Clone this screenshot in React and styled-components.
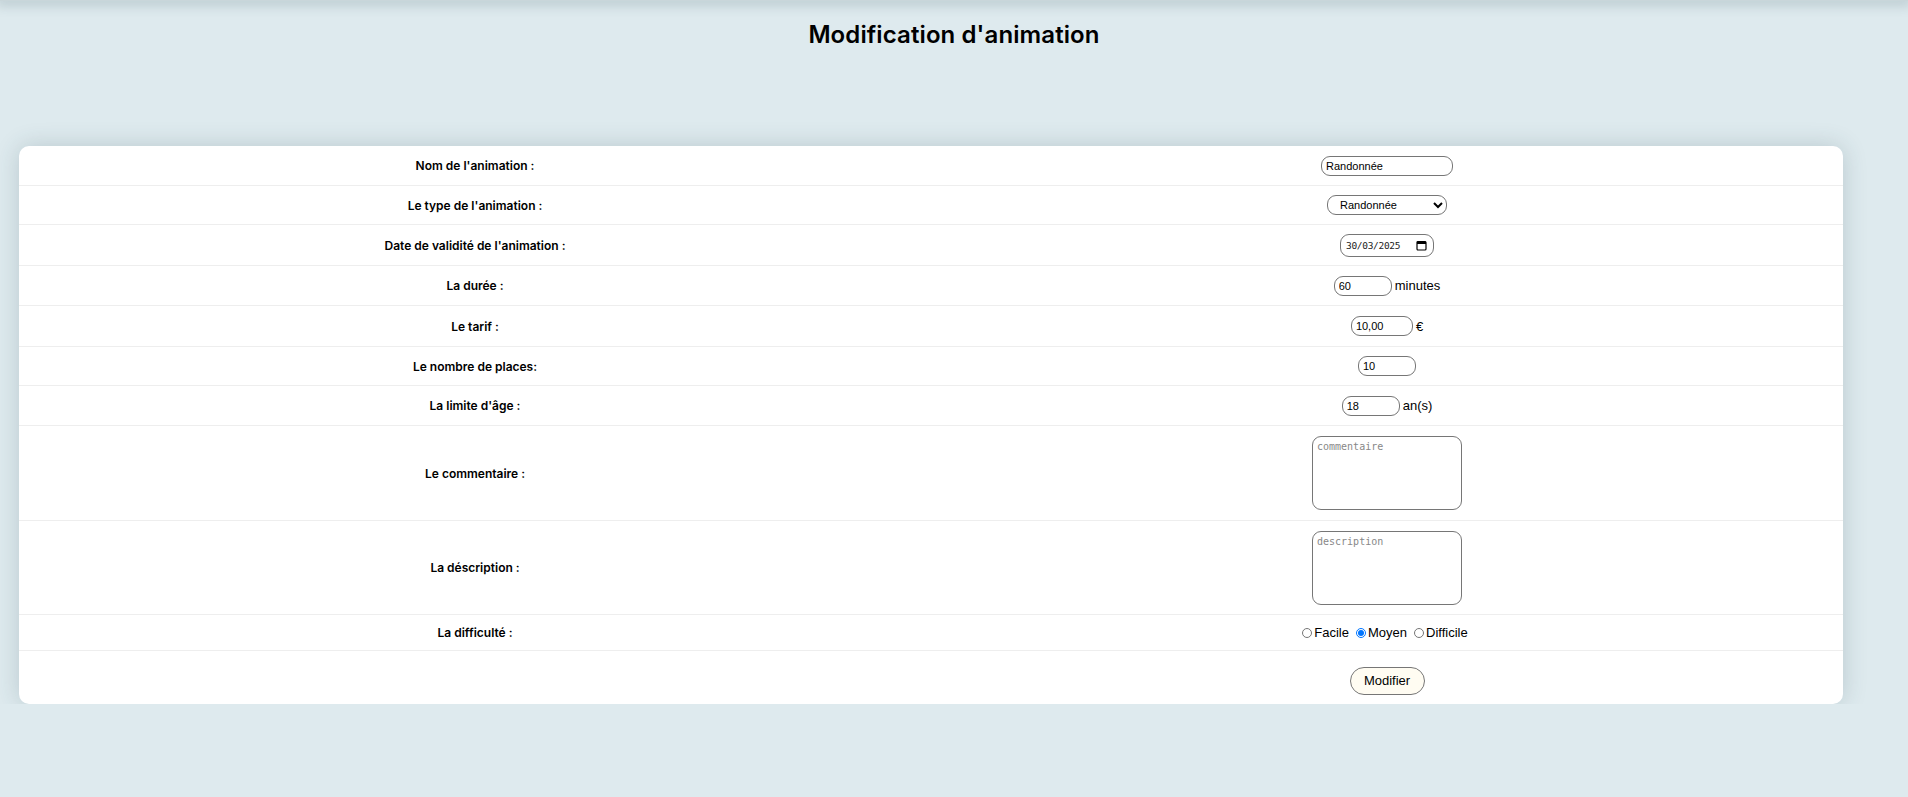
import React from 'react'
import styled, { createGlobalStyle } from 'styled-components'

const GlobalStyle = createGlobalStyle`
  body {
    margin: 0;
    background: #deeaee;
    font-family: Inter, "Liberation Sans", sans-serif;
    color: #000;
  }
`

const TopBar = styled.div`
  height: 1px;
  background: #c9d6da;
  box-shadow: 0 0 12px 4px rgba(60, 90, 100, 0.25);
`

const Title = styled.h1`
  margin: 16px 0 0;
  text-align: center;
  font-size: 24px;
  font-weight: 600;
  letter-spacing: 0.1px;
  line-height: 36px;
`

const Card = styled.div`
  margin: 93px 0 0 19px;
  width: 1824px;
  background: #fff;
  border-radius: 10px;
  box-shadow: 0 0 24px rgba(40, 70, 80, 0.2);
  overflow: hidden;
`

const Row = styled.div`
  display: grid;
  grid-template-columns: 1fr 1fr;
  align-items: center;
  height: ${p => p.h}px;
  box-sizing: border-box;
  border-bottom: ${p => (p.last ? 'none' : '1px solid #eeeeee')};
`

const Label = styled.div`
  text-align: center;
  font-size: 12px;
  font-weight: 600;
`

const Field = styled.div`
  display: flex;
  justify-content: center;
  align-items: center;
  gap: 3px;
  font-family: "Liberation Sans", Arial, sans-serif;
  font-size: 13px;
`

const TextInput = styled.input`
  box-sizing: border-box;
  width: ${p => p.w}px;
  height: 20px;
  padding: 1px 4px;
  border: 1px solid #767676;
  border-radius: 9px;
  font-family: "Liberation Sans", Arial, sans-serif;
  font-size: 11px;
  background: #fff;
  outline: none;
`

const DateBox = styled.label`
  box-sizing: border-box;
  display: inline-flex;
  align-items: center;
  justify-content: space-between;
  width: 94px;
  height: 23px;
  padding: 0 6px 0 5px;
  border: 1px solid #767676;
  border-radius: 9px;
  background: #fff;
  input {
    width: 62px;
    border: none;
    padding: 0;
    outline: none;
    font-family: "DejaVu Sans Mono", monospace;
    font-size: 9.5px;
    letter-spacing: -0.3px;
    color: #222;
  }
`

const Select = styled.select`
  box-sizing: border-box;
  width: 120px;
  height: 20px;
  padding: 0 4px 0 8px;
  border: 1px solid #767676;
  border-radius: 9px;
  font-family: "Liberation Sans", Arial, sans-serif;
  font-size: 11px;
  background: #fff;
`

const TextArea = styled.textarea`
  box-sizing: border-box;
  width: 150px;
  height: 74px;
  padding: 4px;
  border: 1px solid #767676;
  border-radius: 9px;
  font-family: "DejaVu Sans Mono", monospace;
  font-size: 10px;
  resize: none;
  &::placeholder {
    color: #888;
  }
`

const RadioLabel = styled.label`
  display: inline-flex;
  align-items: center;
  margin-right: 4px;
  input {
    margin: 0 2px 0 0;
    width: 10px;
    height: 10px;
  }
`

const Button = styled.button`
  width: 75px;
  height: 28px;
  border: 1px solid #767676;
  border-radius: 14px;
  background: #fffcf2;
  font-family: "Liberation Sans", Arial, sans-serif;
  font-size: 13px;
  color: #000;
  margin-top: 6px;
`

const CalendarIcon = () => (
  <svg width="11" height="11" viewBox="0 0 11 11">
    <rect x="1" y="1.5" width="9" height="8.5" rx="1" fill="none" stroke="#000" strokeWidth="1.2" />
    <rect x="1" y="1.5" width="9" height="2.5" fill="#000" />
  </svg>
)

export default function App() {
  return (
    <>
      <GlobalStyle />
      <TopBar />
      <Title>Modification d'animation</Title>
      <Card>
        <Row h={40}>
          <Label>Nom de l'animation :</Label>
          <Field>
            <TextInput w={132} defaultValue="Randonnée" />
          </Field>
        </Row>
        <Row h={39}>
          <Label>Le type de l'animation :</Label>
          <Field>
            <Select defaultValue="Randonnée">
              <option>Randonnée</option>
              <option>Visite</option>
              <option>Atelier</option>
            </Select>
          </Field>
        </Row>
        <Row h={41}>
          <Label>Date de validité de l'animation :</Label>
          <Field>
            <DateBox>
              <input defaultValue="30/03/2025" />
              <CalendarIcon />
            </DateBox>
          </Field>
        </Row>
        <Row h={40}>
          <Label>La durée :</Label>
          <Field>
            <TextInput w={58} defaultValue="60" />
            <span>minutes</span>
          </Field>
        </Row>
        <Row h={41}>
          <Label>Le tarif :</Label>
          <Field>
            <TextInput w={62} defaultValue="10,00" />
            <span>€</span>
          </Field>
        </Row>
        <Row h={39}>
          <Label>Le nombre de places:</Label>
          <Field>
            <TextInput w={58} defaultValue="10" />
          </Field>
        </Row>
        <Row h={40}>
          <Label>La limite d'âge :</Label>
          <Field>
            <TextInput w={58} defaultValue="18" />
            <span>an(s)</span>
          </Field>
        </Row>
        <Row h={95}>
          <Label>Le commentaire :</Label>
          <Field>
            <TextArea placeholder="commentaire" />
          </Field>
        </Row>
        <Row h={94}>
          <Label>La déscription :</Label>
          <Field>
            <TextArea placeholder="description" />
          </Field>
        </Row>
        <Row h={36}>
          <Label>La difficulté :</Label>
          <Field>
            <RadioLabel>
              <input type="radio" name="diff" /> Facile
            </RadioLabel>
            <RadioLabel>
              <input type="radio" name="diff" defaultChecked /> Moyen
            </RadioLabel>
            <RadioLabel>
              <input type="radio" name="diff" /> Difficile
            </RadioLabel>
          </Field>
        </Row>
        <Row h={53} last>
          <div />
          <Field>
            <Button>Modifier</Button>
          </Field>
        </Row>
      </Card>
    </>
  )
}
